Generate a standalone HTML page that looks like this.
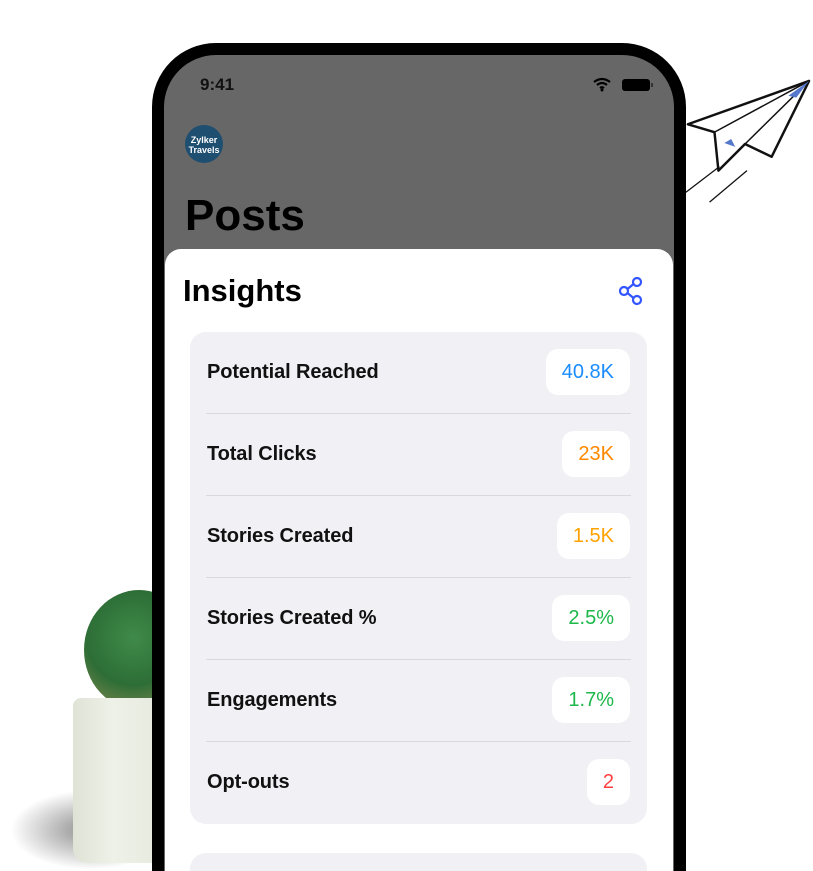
<!DOCTYPE html>
<html style="width:813px;height:871px;overflow:hidden"><head><meta charset="utf-8"><style>
*{margin:0;padding:0;box-sizing:border-box}
body{width:813px;height:871px;overflow:hidden;background:#fff;font-family:"Liberation Sans",sans-serif;position:relative}
.phone{position:absolute;left:152px;top:43px;width:534px;height:828px;background:#000;border-radius:64px 64px 0 0;overflow:hidden}
.screen{position:absolute;left:12px;top:12px;width:510px;height:816px;background:#676767;border-radius:52px 52px 0 0;overflow:hidden}
.time{position:absolute;left:36px;top:20px;font-size:17px;color:#111;font-weight:bold}
.sheet{position:absolute;left:1px;top:194px;width:508px;height:622px;background:#fff;border-radius:16px 16px 0 0;overflow:hidden}
.card{position:absolute;left:25px;width:457px;background:#f0f0f5;border-radius:16px}
.row{height:82px;position:relative;border-bottom:1px solid #d9d9de;margin:0 16px}
.row:last-child{border-bottom:none}
.lbl{position:absolute;left:1px;top:29px;font-size:20px;color:#111;font-weight:bold;letter-spacing:-0.1px}
.pill{position:absolute;right:1px;top:17px;height:46px;background:#fff;border-radius:12px;padding:0 16px;line-height:46px;font-size:20px}
</style></head><body>
<div style="position:absolute;left:10px;top:790px;width:160px;height:80px;border-radius:50%;background:radial-gradient(ellipse,rgba(0,0,0,.45),rgba(0,0,0,0) 70%)"></div>
<div style="position:absolute;left:84px;top:590px;width:110px;height:120px;border-radius:50%;background:radial-gradient(circle at 45% 40%,#3f8a4a,#2d6e36 50%,#8f8b52 92%)"></div>
<div style="position:absolute;left:73px;top:698px;width:100px;height:165px;background:linear-gradient(90deg,#dfe3d6,#eef1e7 40%,#e4e8dc);border-radius:8px 0 10px 14px"></div>
<svg style="position:absolute;left:680px;top:75px" width="133" height="135" viewBox="0 0 135 135">
<path d="M8 49 L131 5 L93 82 L66 69 L39 96 L35 57 Z" fill="#fff" stroke="#111" stroke-width="2.5" stroke-linejoin="round"/>
<path d="M35 57 L131 5 L66 69" fill="none" stroke="#111" stroke-width="1.5"/>
<path d="M45 68 L52 64 L56 72 Z" fill="#5577cc"/>
<path d="M110 20 L131 5 L118 22 Z" fill="#5577cc"/>
<path d="M30 128 L68 96 M6 118 L40 92" stroke="#111" stroke-width="1.3"/>
</svg>
<div class="phone"><div class="screen">
<div class="time">9:41</div>
<svg style="position:absolute;left:428px;top:22px" width="66" height="16"><path d="M2 5 Q10 -1 18 5 M5 8 Q10 4 15 8 M8 11 Q10 9.5 12 11" stroke="#000" stroke-width="2.2" fill="none"/><circle cx="10" cy="13" r="1.5"/><rect x="30" y="2" width="28" height="12" rx="3" fill="#000"/><rect x="59" y="6" width="2" height="4" fill="#333"/></svg>
<div style="position:absolute;left:21px;top:70px;width:38px;height:38px;border-radius:50%;background:#1e4e70;color:#fff;font-size:9px;text-align:center;line-height:10px;padding-top:10px;font-weight:bold">Zylker<br>Travels</div>
<div style="position:absolute;left:21px;top:136px;font-size:44px;font-weight:bold;color:#000">Posts</div>
<div class="sheet">
<div style="position:absolute;left:18px;top:24px;font-size:31px;font-weight:bold;color:#000">Insights</div>
<svg style="position:absolute;left:452px;top:28px" width="30" height="30" viewBox="0 0 30 30" fill="none" stroke="#3355ff" stroke-width="2.2"><circle cx="20" cy="5" r="4"/><circle cx="7" cy="14" r="4"/><circle cx="20" cy="23" r="4"/><path d="M10.5 12 L16.5 7 M10.5 16 L16.5 21"/></svg>
<div class="card" style="top:83px">
<div class="row"><div class="lbl">Potential Reached</div><div class="pill" style="color:#1a8cff">40.8K</div></div>
<div class="row"><div class="lbl">Total Clicks</div><div class="pill" style="color:#ff8800">23K</div></div>
<div class="row"><div class="lbl">Stories Created</div><div class="pill" style="color:#ffa200">1.5K</div></div>
<div class="row"><div class="lbl">Stories Created %</div><div class="pill" style="color:#1cb84a">2.5%</div></div>
<div class="row"><div class="lbl">Engagements</div><div class="pill" style="color:#1cb84a">1.7%</div></div>
<div class="row"><div class="lbl">Opt-outs</div><div class="pill" style="color:#ff4040">2</div></div>
</div>
<div class="card" style="top:604px;height:100px"></div>
</div>
</div></div>
</body></html>
